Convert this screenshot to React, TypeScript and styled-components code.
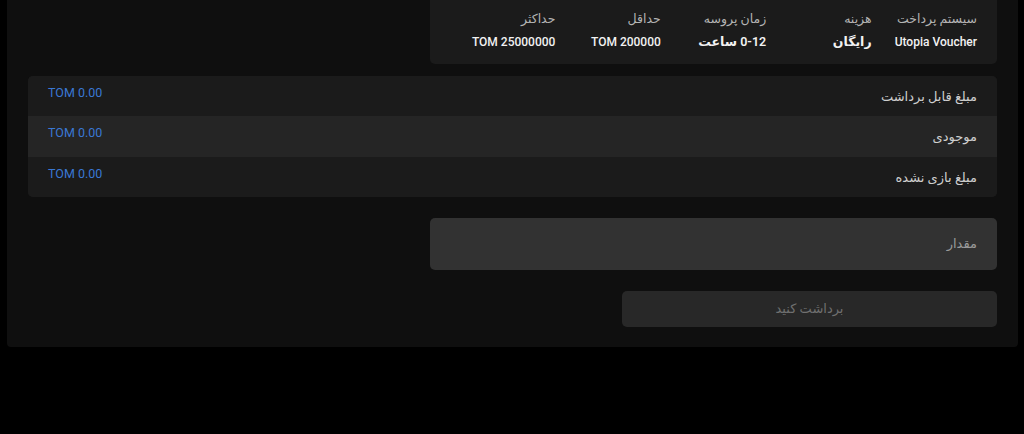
import styled, { createGlobalStyle } from "styled-components";

const GlobalStyle = createGlobalStyle`
  html, body {
    margin: 0;
    background: #000;
  }
  body {
    font-family: Roboto, "DejaVu Sans", sans-serif;
    color: #e6e6e6;
  }
`;

type Limit = { label: string; value: string; bold?: boolean };

const limits: Limit[] = [
  { label: "سیستم پرداخت", value: "Utopia Voucher" },
  { label: "هزینه", value: "رایگان", bold: true },
  { label: "زمان پروسه", value: "0-12 ساعت", bold: true },
  { label: "حداقل", value: "TOM 200000" },
  { label: "حداکثر", value: "TOM 25000000" },
];

const balances = [
  { label: "مبلغ قابل برداشت", value: "TOM 0.00" },
  { label: "موجودی", value: "TOM 0.00" },
  { label: "مبلغ بازی نشده", value: "TOM 0.00" },
];

const App = () => {
  return (
    <>
      <GlobalStyle />
      <StPanel dir="rtl">
        <StInfoCard>
          {limits.map((item) => (
            <StInfoCol key={item.label}>
              <StInfoLabel>{item.label}</StInfoLabel>
              <StInfoValue $bold={item.bold}>
                <bdi>{item.value}</bdi>
              </StInfoValue>
            </StInfoCol>
          ))}
        </StInfoCard>

        <StBalanceList>
          {balances.map((row, i) => (
            <StBalanceRow key={row.label} $alt={i % 2 === 1}>
              <StBalanceLabel>{row.label}</StBalanceLabel>
              <StBalanceValue dir="ltr">{row.value}</StBalanceValue>
            </StBalanceRow>
          ))}
        </StBalanceList>

        <StAmountInput placeholder="مقدار" />

        <StSubmitButton disabled>برداشت کنید</StSubmitButton>
      </StPanel>
    </>
  );
};

export default App;

const StPanel = styled.div`
  margin: 0 6px 0 7px;
  padding: 0 21px 20px;
  background: #0f0f0f;
  border-radius: 0 0 4px 4px;
  display: flex;
  flex-direction: column;
  align-items: flex-start;
`;

const StInfoCard = styled.div`
  width: 567px;
  box-sizing: border-box;
  padding: 10px 20px 13px;
  background: #1b1b1b;
  border-radius: 0 0 5px 5px;
  display: grid;
  grid-template-columns: repeat(5, 1fr);
`;

const StInfoCol = styled.div`
  display: flex;
  flex-direction: column;
  gap: 5px;
`;

const StInfoLabel = styled.div`
  font-size: 12.5px;
  line-height: 18px;
  color: #b4b4b4;
`;

const StInfoValue = styled.div<{ $bold?: boolean }>`
  font-size: ${(p) => (p.$bold ? "12.5px" : "12px")};
  line-height: 18px;
  color: #f2f2f2;
  font-weight: ${(p) => (p.$bold ? 600 : 500)};
`;

const StBalanceList = styled.div`
  margin-top: 12px;
  width: 100%;
  border-radius: 5px;
  overflow: hidden;
  background: #1b1b1b;
`;

const StBalanceRow = styled.div<{ $alt?: boolean }>`
  height: 40.3px;
  padding: 0 20px;
  display: flex;
  align-items: center;
  justify-content: space-between;
  background: ${(p) => (p.$alt ? "#252525" : "#1b1b1b")};
`;

const StBalanceLabel = styled.div`
  font-size: 13px;
  color: #cfcfcf;
  padding-top: 1px;
`;

const StBalanceValue = styled.div`
  font-size: 12.5px;
  color: #3a78d4;
  padding-bottom: 7px;
`;

const StAmountInput = styled.input`
  margin-top: 21px;
  width: 567px;
  height: 52px;
  box-sizing: border-box;
  padding: 0 20px;
  border: none;
  border-radius: 5px;
  background: #323232;
  color: #e6e6e6;
  font-family: Roboto, "DejaVu Sans", sans-serif;
  font-size: 13px;
  outline: none;
  &::placeholder {
    color: #9a9a9a;
  }
`;

const StSubmitButton = styled.button`
  margin-top: 21px;
  width: 375px;
  height: 36px;
  border: none;
  border-radius: 5px;
  background: #282828;
  color: #707070;
  font-family: Roboto, "DejaVu Sans", sans-serif;
  font-size: 13px;
  cursor: not-allowed;
`;
